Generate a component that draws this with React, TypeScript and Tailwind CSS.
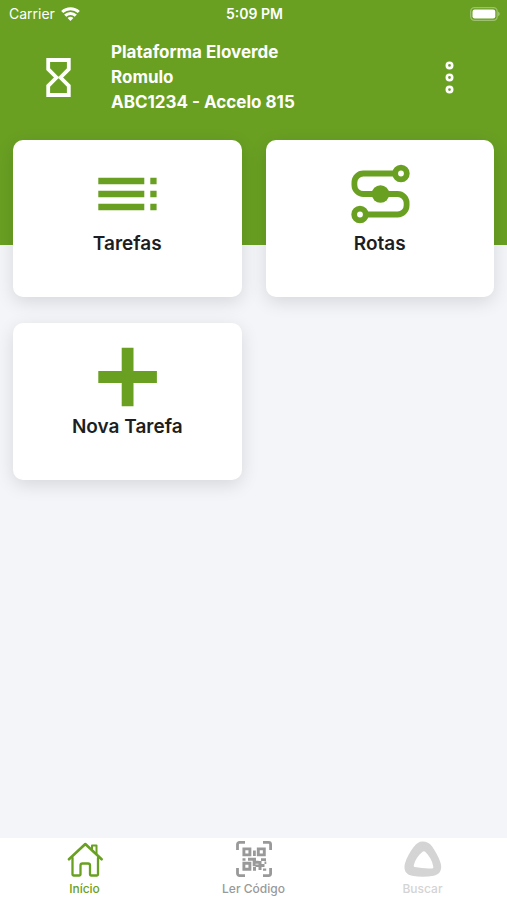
import type { ReactNode } from 'react';

function WifiIcon() {
  return (
    <svg className="h-[15px] w-[19px]" viewBox="0 0 19 15" fill="none" stroke="#fff" strokeWidth="3" aria-hidden="true">
      <path d="M1.2 5a12 12 0 0 1 16.6 0" />
      <path d="M4.2 8.7a7.6 7.6 0 0 1 10.6 0" />
      <path d="M9.5 14 6.6 11.1a4.1 4.1 0 0 1 5.8 0z" fill="#fff" stroke="none" />
    </svg>
  );
}

function BatteryIcon() {
  return (
    <svg className="h-[14px] w-[30px]" viewBox="0 0 30 14" aria-label="Bateria" role="img">
      <rect x="0.7" y="0.7" width="26.5" height="12.6" rx="3.8" fill="none" stroke="#fff" strokeOpacity=".35" strokeWidth="1.3" />
      <rect x="2.5" y="2.5" width="22.8" height="9" rx="2.2" fill="#fff" />
      <path d="M28.3 4.8c1.6.5 1.6 3.9 0 4.4z" fill="#fff" fillOpacity=".5" />
    </svg>
  );
}

function HourglassIcon() {
  return (
    <svg className="h-[39px] w-[25px]" viewBox="0 0 25 39" fill="none" stroke="#fff" strokeWidth="3.8" aria-hidden="true">
      <path d="M2.2 2h20.6v9.2l-8.3 8.3 8.3 8.3V37H2.2v-9.2l8.3-8.3-8.3-8.3z" />
    </svg>
  );
}

function DotsIcon() {
  return (
    <svg className="h-[33px] w-[9px]" viewBox="0 0 9 33" fill="none" stroke="#fff" strokeWidth="2.6" aria-hidden="true">
      <circle cx="4.5" cy="4.4" r="2.7" />
      <circle cx="4.5" cy="16.5" r="2.7" />
      <circle cx="4.5" cy="28.6" r="2.7" />
    </svg>
  );
}

function TasksIcon() {
  return (
    <svg className="size-[60px]" viewBox="0 0 60 60" fill="#69a022" aria-hidden="true">
      <path d="M1.3 13.7h46v6.5h-46zM1.3 26.7h46v6.5h-46zM1.3 39.7h46v6.5h-46zM53.3 13.7h6.3v6.5h-6.3zM53.3 26.7h6.3v6.5h-6.3zM53.3 39.7h6.3v6.5h-6.3z" />
    </svg>
  );
}

function RoutesIcon() {
  return (
    <svg className="size-[60px]" viewBox="0 0 60 60" fill="none" stroke="#69a022" strokeWidth="5.8" aria-hidden="true">
      <path d="M45.5 9.5H13.5A9 9 0 0 0 4.4 18.5v2.7A9 9 0 0 0 13.5 30h34a9 9 0 0 1 9.1 9v2.5a9 9 0 0 1-9.1 9H15.5" />
      <circle cx="51" cy="9.5" r="5.8" />
      <circle cx="10" cy="50.5" r="5.8" />
      <circle cx="30.5" cy="30" r="8.8" fill="#69a022" stroke="none" />
    </svg>
  );
}

function PlusIcon() {
  return (
    <svg className="size-[60px]" viewBox="0 0 60 60" fill="#69a022" aria-hidden="true">
      <path d="M24.7.7h11.8v23.4h23.4v11.8H36.5v23.4H24.7V35.9H1.3V24.1h23.4z" />
    </svg>
  );
}

function HomeIcon() {
  return (
    <svg className="size-9 shrink-0" viewBox="0 0 36 36" fill="none" stroke="currentColor" strokeWidth="2" strokeLinejoin="round" strokeLinecap="round" aria-hidden="true">
      <path d="M2 18.3 18.3 3 34.6 18.3" strokeWidth="2.6" />
      <path d="M5.5 17V33.5q0 1 1 1h6q1 0 1-1V24.5q0-2 2-2h5.5q2 0 2 2v9q0 1 1 1h6q1 0 1-1V17" strokeWidth="2.3" />
      <path d="M25 8.5V4.5h4.5v8.2" />
    </svg>
  );
}

function QrIcon() {
  return (
    <svg className="size-9 shrink-0" viewBox="0 0 36 36" fill="none" stroke="currentColor" aria-hidden="true">
      <path strokeWidth="2.8" d="M1.5 9V3.4a2 2 0 0 1 2-2H9M27 1.4h5.6a2 2 0 0 1 2 2V9M34.6 27v5.6a2 2 0 0 1-2 2H27M9 34.6H3.5a2 2 0 0 1-2-2V27" />
      <path strokeWidth="2.9" d="M7.9 7.9h6v6h-6zM22.3 7.9h6v6h-6zM7.9 22.3h6v6h-6z" />
      <path fill="currentColor" stroke="none" d="M17 9.5h2.8v5.5H17zM6.5 17.3h3v2.5h-3zM12 16.8h8v3h2.5v3h-3v2.5h-2.8v-5.5H12zM25 17.3h5v2.8h-5zM22.5 20h3v3h3v3h-3v3h-3v-3h-3v-2.5h3zM28.5 20.5h1.8V23h-1.8zM17 26h3v3.7h-3zM27 27.5h3.2v2.3H27z" />
    </svg>
  );
}

function SearchLogo() {
  return (
    <svg className="h-9 w-[38px] shrink-0" viewBox="-1 -0.5 38 36" fill="currentColor" fillRule="evenodd" aria-hidden="true">
      <path d="M17.5 0c4 0 7.3 1.8 9.6 5 3.3 4.6 6.5 10.4 8.4 16.2 2 6.5-.4 11.6-6.8 13-7 1.5-14.7 1.5-21.6 0C.9 33-1.6 28.6-.1 22.3 1.7 16 5.1 10.1 8.9 5.3 11.5 2 14 0 17.5 0zM17.6 10.2c-4.300 3.500-7.500 8-8.800 13.600q-.4 1.500 1.100 1.800c5.600 1.100 11.300 1.600 17 1.300q1.700-.1 1.400-1.700c-1.100-6-3.900-11-8.100-14.900q-1.200-1.200-2.600-.1z" />
    </svg>
  );
}

function Card({ icon, label }: { icon: ReactNode; label: string }) {
  return (
    <button type="button" className="flex h-[157px] flex-col items-center rounded-[10px] bg-white pt-6 text-[19px] font-semibold text-[#1c1e21] shadow-[0_5px_18px_rgba(0,0,0,0.12)]">
      {icon}
      <span className="leading-10">{label}</span>
    </button>
  );
}

function Tab({ icon, label, color }: { icon: ReactNode; label: string; color: string }) {
  return (
    <a href="#" className={`flex flex-1 flex-col items-center gap-1 pt-[3px] text-xs font-medium ${color}`}>
      {icon}
      <span>{label}</span>
    </a>
  );
}

export default function App() {
  return (
    <div className="flex min-h-screen flex-col bg-[#f3f5f9] font-['Inter','Liberation_Sans',sans-serif]">
      <header className="h-[245px] bg-[#69a022] text-white">
        <div className="grid h-7 grid-cols-3 items-center pr-[7px] pl-[9px] text-sm">
          <div className="flex items-center gap-[6px]">
            <span>Carrier</span>
            <WifiIcon />
          </div>
          <span className="text-center font-semibold">5:09 PM</span>
          <div className="flex justify-end">
            <BatteryIcon />
          </div>
        </div>
        <div className="flex items-center pt-3 pr-[53px] pl-[46px]">
          <HourglassIcon />
          <div className="ml-10 flex-1 text-[17px] leading-[25px] font-bold">
            <h1>Plataforma Eloverde</h1>
            <p>Romulo</p>
            <p>ABC1234 - Accelo 815</p>
          </div>
          <button type="button" aria-label="Menu">
            <DotsIcon />
          </button>
        </div>
      </header>
      <main className="-mt-[105px] grid flex-1 grid-cols-2 content-start gap-x-6 gap-y-[26px] px-[13px] pb-6">
        <Card icon={<TasksIcon />} label="Tarefas" />
        <Card icon={<RoutesIcon />} label="Rotas" />
        <Card icon={<PlusIcon />} label="Nova Tarefa" />
      </main>
      <nav className="flex h-[62px] bg-white">
        <Tab icon={<HomeIcon />} label="Início" color="text-[#69a022]" />
        <Tab icon={<QrIcon />} label="Ler Código" color="text-[#999999]" />
        <Tab icon={<SearchLogo />} label="Buscar" color="text-[#d4d4d4]" />
      </nav>
    </div>
  );
}
